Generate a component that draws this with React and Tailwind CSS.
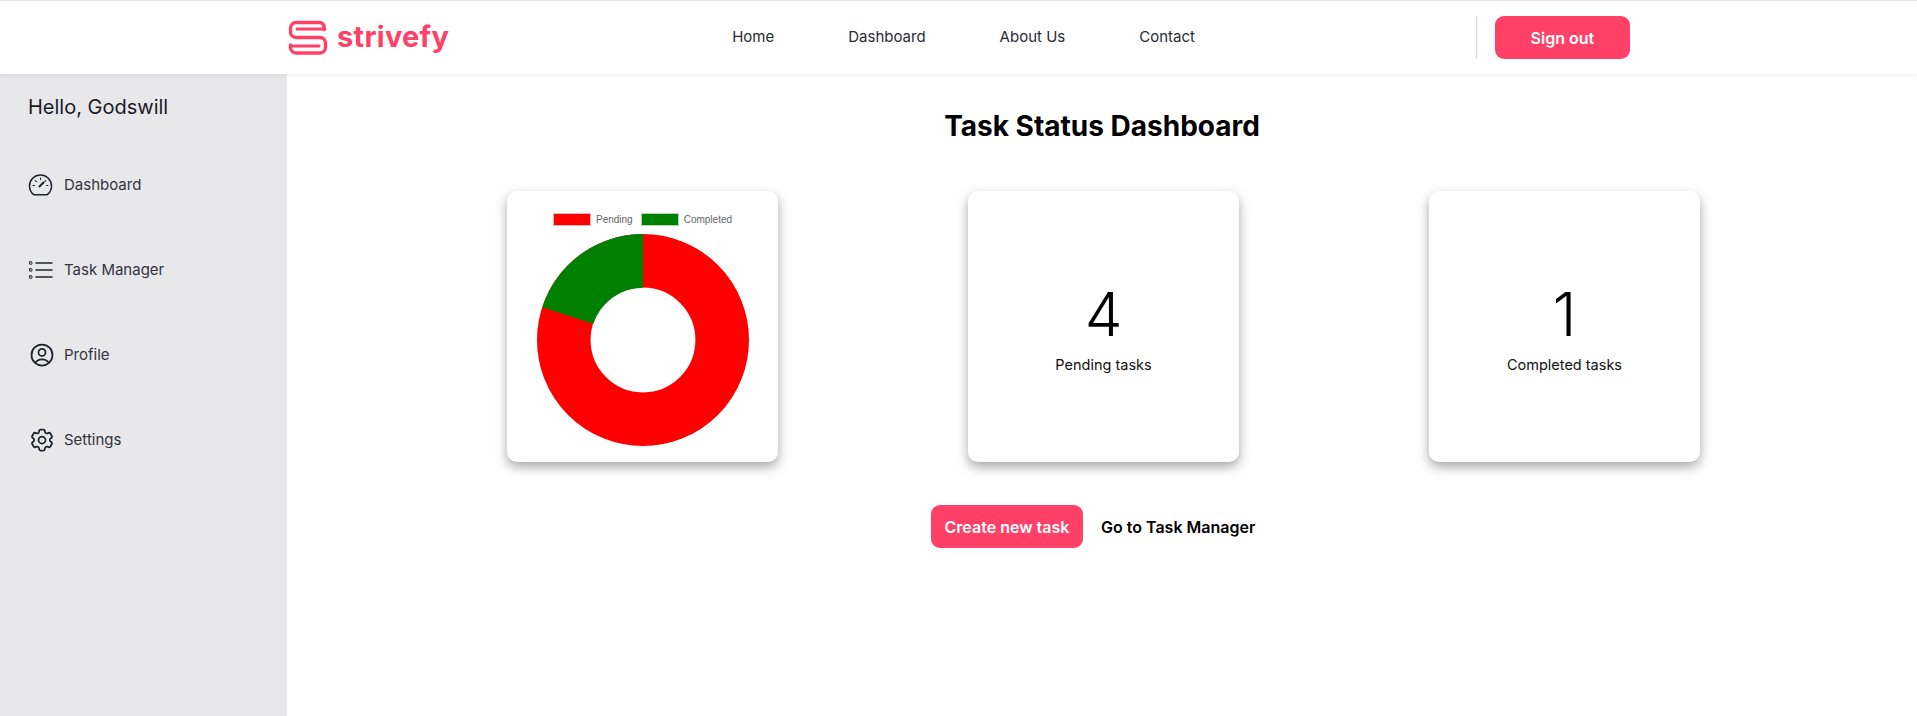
import { HiOutlineCog6Tooth, HiOutlineUserCircle } from 'react-icons/hi2';

const font = { fontFamily: 'Inter, "Noto Sans", sans-serif' };

function Logo() {
  return (
    <div className="flex items-center gap-[9px]">
      <svg width="40" height="36" viewBox="0 0 40 36" fill="none">
        <path d="M36 9.5 V7 a4.5 4.5 0 0 0 -4.5 -4.5 H8 a5.5 5.5 0 0 0 -5.5 5.5 V12 a5.5 5.5 0 0 0 5.5 5.5 H32 a5.5 5.5 0 0 1 5.5 5.5 V27.5 a5.5 5.5 0 0 1 -5.5 5.5 H8 a5.5 5.5 0 0 1 -5.5 -5.5 V25" stroke="#ff4067" strokeWidth="3.4" strokeLinecap="round" />
        <path d="M37 9 H9 M3 26 H31" stroke="#ff4067" strokeWidth="3" strokeLinecap="round" />
      </svg>
      <span className="text-[29px] leading-none font-bold text-[#ff4067] tracking-[0.01em] pb-[2px] font-['Inter']">strivefy</span>
    </div>
  );
}

function GaugeIcon() {
  return (
    <svg width="25" height="25" viewBox="0 0 25 25" fill="none" stroke="#1f2230" strokeWidth="1.5" strokeLinecap="round">
      <path d="M6 21.8 H19 C21.6 20 23.5 16.9 23.5 13 A11 11 0 0 0 1.5 13 C1.5 16.9 3.4 20 6 21.8 Z" />
      <path d="M12.5 5 V6.5 M5 12.5 H6.5 M7.3 7.6 L8.3 8.6 M18.5 12.5 H20 M17.7 7.6 L16.7 8.6" strokeWidth="1.1" />
      <path d="M11.5 13.5 L15.5 9.5" strokeWidth="1.8" />
    </svg>
  );
}

function ListIcon() {
  return (
    <svg width="25" height="20" viewBox="0 0 25 20" fill="none" stroke="#1f2230" strokeWidth="1.4" strokeLinecap="round">
      <path d="M8 3 H24 M8 10 H24 M8 17 H24" strokeWidth="1.6" />
      <rect x="1.5" y="1.8" width="2.4" height="2.4" rx=".4" strokeWidth="1" />
      <rect x="1.5" y="8.8" width="2.4" height="2.4" rx=".4" strokeWidth="1" />
      <rect x="1.5" y="15.8" width="2.4" height="2.4" rx=".4" strokeWidth="1" />
    </svg>
  );
}

const nav = [
  { label: 'Dashboard', icon: <GaugeIcon /> },
  { label: 'Task Manager', icon: <ListIcon /> },
  { label: 'Profile', icon: <HiOutlineUserCircle className="text-[28px] text-[#1f2230]" /> },
  { label: 'Settings', icon: <HiOutlineCog6Tooth className="text-[28px] text-[#1f2230]" /> },
];

function Donut() {
  // 80% red, 20% green starting at 12 o'clock
  return (
    <svg width="214" height="214" viewBox="0 0 214 214" className="block">
      <circle cx="107" cy="107" r="79.2" fill="none" stroke="#ff0000" strokeWidth="53.6" />
      <path d="M107 1 A106 106 0 0 0 6.2 74.2 L57.3 90.8 A52.3 52.3 0 0 1 107 54.7 Z" fill="#008000" />
    </svg>
  );
}

function StatCard({ value, label }) {
  return (
    <div className="w-[271px] h-[271px] bg-white rounded-[10px] shadow-[0_5px_12px_rgba(0,0,0,0.35)] flex flex-col items-center justify-center">
      <div className="text-[60px] leading-[72px] font-light text-black">{value}</div>
      <div className="text-[14.5px] leading-[22px] mt-[4px] text-[#111]">{label}</div>
    </div>
  );
}

export default function App() {
  return (
    <div style={font} className="min-h-[716px] bg-white flex flex-col">
      <header className="h-[74px] border-t border-[#e2e2e2] bg-white shadow-[0_1px_6px_rgba(0,0,0,0.08)] relative z-10 flex items-center pl-[288px]">
        <Logo />
        <nav className="flex gap-[74px] ml-[283px] text-[15px] text-[#2a2a33]">
          <a>Home</a>
          <a>Dashboard</a>
          <a>About Us</a>
          <a>Contact</a>
        </nav>
        <div className="ml-[281px] h-[43px] border-l border-[#d4d4d4]" />
        <button className="ml-[18px] w-[135px] h-[43px] rounded-[9px] bg-[#ff4067] text-white text-[16px] font-semibold">Sign out</button>
      </header>
      <div className="flex flex-1">
        <aside className="w-[287px] h-[642px] bg-[#e8e8ea] pl-[28px] pt-[20px]">
          <div className="text-[20px] leading-[26px] text-[#1b1b26]">Hello, Godswill</div>
          <ul className="mt-[51px] flex flex-col gap-[57px]">
            {nav.map((item) => (
              <li key={item.label} className="flex items-center h-[28px]">
                <span className="w-[36px] flex items-center">{item.icon}</span>
                <span className="text-[15px] text-[#33333f]">{item.label}</span>
              </li>
            ))}
          </ul>
        </aside>
        <main className="flex-1 flex flex-col items-center pt-[33px]">
          <h1 className="text-[28px] leading-[38px] font-bold text-black">Task Status Dashboard</h1>
          <div className="mt-[46px] pl-[3px] flex gap-[190px]">
            <div className="w-[271px] h-[271px] bg-white rounded-[10px] shadow-[0_5px_12px_rgba(0,0,0,0.35)] flex flex-col items-center pt-[22px]">
              <div className="flex items-center font-['Liberation_Sans'] text-[10px] text-[#666] h-[13px]">
                <span className="w-[38px] h-[13px] bg-[#ff0000] border border-[#ffb3b3]" />
                <span className="ml-[5px]">Pending</span>
                <span className="ml-[8px] w-[38px] h-[13px] bg-[#008000] border border-[#b3d9b3]" />
                <span className="ml-[5px]">Completed</span>
              </div>
              <div className="mt-[7px]">
                <Donut />
              </div>
            </div>
            <StatCard value="4" label="Pending tasks" />
            <StatCard value="1" label="Completed tasks" />
          </div>
          <div className="mt-[43px] flex items-center self-start ml-[644px]">
            <button className="h-[43px] w-[152px] rounded-[9px] bg-[#ff4067] text-white text-[16px] font-semibold">Create new task</button>
            <a className="ml-[18px] text-[16px] font-semibold text-black">Go to Task Manager</a>
          </div>
        </main>
      </div>
    </div>
  );
}
